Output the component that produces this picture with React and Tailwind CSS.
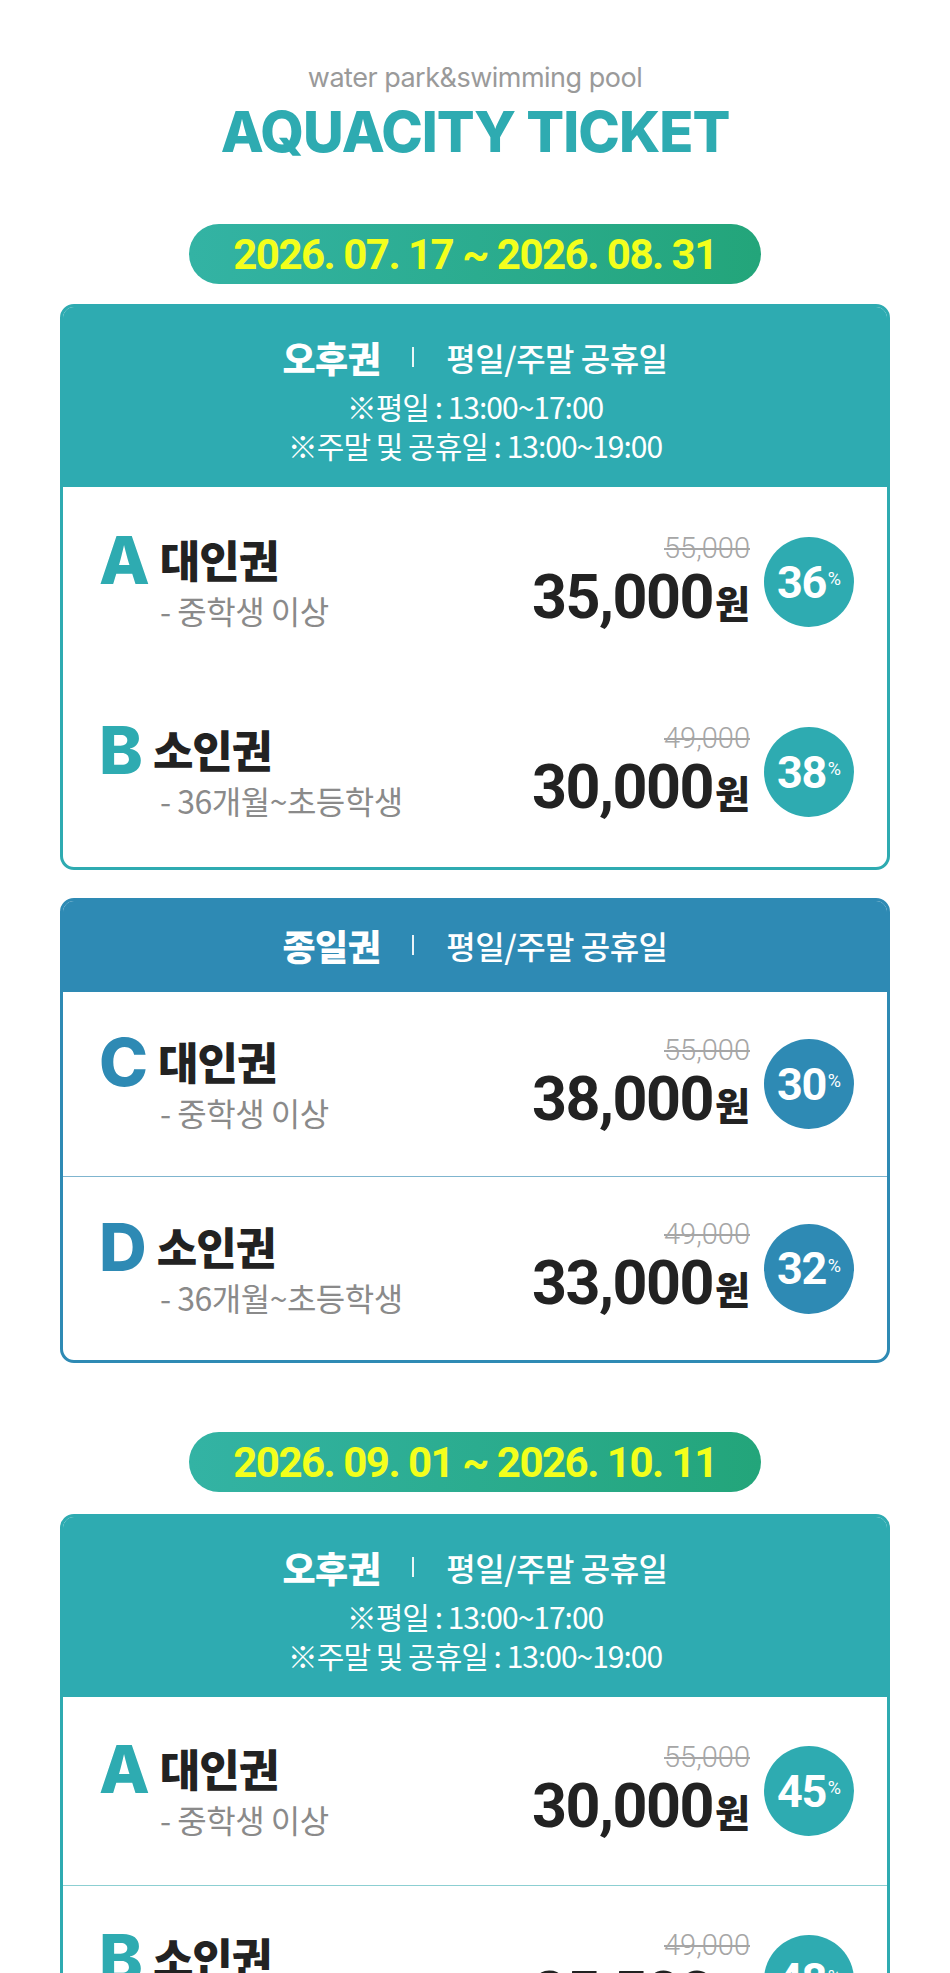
import React from 'react';

const KR = { fontFamily: '"Noto Sans CJK KR", "Noto Sans", sans-serif' };

const themes = {
  teal: {
    head: 'bg-[#2eabb1]',
    border: 'border-[#2eabb1]',
    letter: 'text-[#2eabb1]',
    badge: 'bg-[#2eabb1]',
    line: 'border-[#8ccfd2]',
  },
  blue: {
    head: 'bg-[#2e8ab4]',
    border: 'border-[#2e8ab4]',
    letter: 'text-[#2e8ab4]',
    badge: 'bg-[#2e8ab4]',
    line: 'border-[#7fb5cf]',
  },
};

const sections = [
  {
    date: '2026. 07. 17 ~ 2026. 08. 31',
    cards: [
      {
        theme: 'teal',
        title: '오후권',
        hours: true,
        divider: false,
        rowH: 'h-[190px]',
        rows: [
          { letter: 'A', name: '대인권', sub: '- 중학생 이상', was: '55,000', price: '35,000', off: '36' },
          { letter: 'B', name: '소인권', sub: '- 36개월~초등학생', was: '49,000', price: '30,000', off: '38' },
        ],
      },
      {
        theme: 'blue',
        title: '종일권',
        hours: false,
        divider: true,
        rowH: 'h-[184px]',
        rows: [
          { letter: 'C', name: '대인권', sub: '- 중학생 이상', was: '55,000', price: '38,000', off: '30' },
          { letter: 'D', name: '소인권', sub: '- 36개월~초등학생', was: '49,000', price: '33,000', off: '32' },
        ],
      },
    ],
  },
  {
    date: '2026. 09. 01 ~ 2026. 10. 11',
    cards: [
      {
        theme: 'teal',
        title: '오후권',
        hours: true,
        divider: true,
        rowH: 'h-[188px]',
        rows: [
          { letter: 'A', name: '대인권', sub: '- 중학생 이상', was: '55,000', price: '30,000', off: '45' },
          { letter: 'B', name: '소인권', sub: '- 36개월~초등학생', was: '49,000', price: '25,500', off: '48' },
        ],
      },
    ],
  },
];

function DatePill({ text }) {
  return (
    <div className="flex justify-center">
      <div
        className="h-[60px] px-[44px] rounded-full bg-linear-to-r from-[#33b3a4] to-[#23a57a] flex items-center text-[42px] font-bold tracking-[-1.5px] text-[#f3ff1c]"
        style={{ fontFamily: 'Roboto, sans-serif' }}
      >
        {text}
      </div>
    </div>
  );
}

function Row({ row, t, divider, h }) {
  return (
    <div className={`${h} flex items-center pl-[36px] pr-[33px] ${divider ? `border-t ${t.line}` : ''}`}>
      <div className="flex-1">
        <div className="flex items-end gap-[10px]">
          <span
            className={`text-[66px] leading-[44px] font-extrabold ${t.letter}`}
            style={{ fontFamily: 'Inter, sans-serif' }}
          >
            {row.letter}
          </span>
          <span className="text-[44px] leading-[46px] font-black text-[#222] tracking-[-1px]" style={KR}>
            {row.name}
          </span>
        </div>
        <div className="pl-[61px] mt-[10px] text-[32px] leading-[36px] text-[#8a8a8a] tracking-[-0.5px]" style={KR}>
          {row.sub}
        </div>
      </div>
      <div className="flex flex-col items-end mr-[14px]">
        <span
          className="text-[29px] leading-[30px] font-light text-[#a6a6a6] line-through"
          style={{ fontFamily: 'Roboto, sans-serif' }}
        >
          {row.was}
        </span>
        <div className="mt-[4px] flex items-baseline leading-[60px]">
          <span className="text-[61px] font-bold text-[#222] tracking-[-1.5px]" style={{ fontFamily: 'Roboto, sans-serif' }}>
            {row.price}
          </span>
          <span className="text-[38px] font-black text-[#222] ml-[2px]" style={KR}>
            원
          </span>
        </div>
      </div>
      <div className={`w-[90px] h-[90px] rounded-full ${t.badge} flex items-center justify-center text-white`}>
        <span className="text-[45px] font-bold tracking-[-1.5px] leading-none" style={{ fontFamily: 'Roboto, sans-serif' }}>
          {row.off}
        </span>
        <span className="text-[18px] leading-none ml-[2px] -mt-[6px]" style={{ fontFamily: 'Roboto, sans-serif' }}>
          %
        </span>
      </div>
    </div>
  );
}

function Card({ card }) {
  const t = themes[card.theme];
  return (
    <div className={`rounded-[14px] border-[3px] ${t.border} overflow-hidden bg-white`}>
      <div
        className={`${t.head} text-white text-center ${card.hours ? 'pt-[30px] pb-[22px]' : 'pt-[24px] pb-[27px]'}`}
        style={KR}
      >
        <div className="flex items-center justify-center h-[40px]">
          <span className="text-[36px] font-black tracking-[-0.5px]">{card.title}</span>
          <span className="w-[2px] h-[20px] bg-white/90 mx-[32px]" />
          <span className="text-[32px] font-medium tracking-[-0.5px]">평일/주말 공휴일</span>
        </div>
        {card.hours && (
          <div className="mt-[10px] text-[30px] leading-[39px] tracking-[-1px]">
            <div>※평일 : 13:00~17:00</div>
            <div>※주말 및 공휴일 : 13:00~19:00</div>
          </div>
        )}
      </div>
      {card.rows.map((row, i) => (
        <Row key={row.letter} row={row} t={t} h={card.rowH} divider={card.divider && i > 0} />
      ))}
    </div>
  );
}

export default function App() {
  return (
    <div className="w-full bg-white pt-[63px] pb-[60px]">
      <div className="text-center">
        <div className="text-[27px] leading-[30px] text-[#9a9a9a] tracking-[-0.5px]" style={{ fontFamily: 'Inter, sans-serif' }}>
          water park&amp;swimming pool
        </div>
        <div
          className="mt-[11px] text-[56px] leading-[56px] font-extrabold text-[#2eabb1] tracking-[-1px]"
          style={{ fontFamily: 'Inter, sans-serif' }}
        >
          AQUACITY TICKET
        </div>
      </div>

      <div className="mt-[64px] px-[60px]">
        <DatePill text={sections[0].date} />
        <div className="mt-[20px] flex flex-col gap-[28px]">
          {sections[0].cards.map((c, i) => (
            <Card key={i} card={c} />
          ))}
        </div>

        <div className="mt-[69px]">
          <DatePill text={sections[1].date} />
        </div>
        <div className="mt-[22px] flex flex-col gap-[28px]">
          {sections[1].cards.map((c, i) => (
            <Card key={i} card={c} />
          ))}
        </div>
      </div>
    </div>
  );
}
